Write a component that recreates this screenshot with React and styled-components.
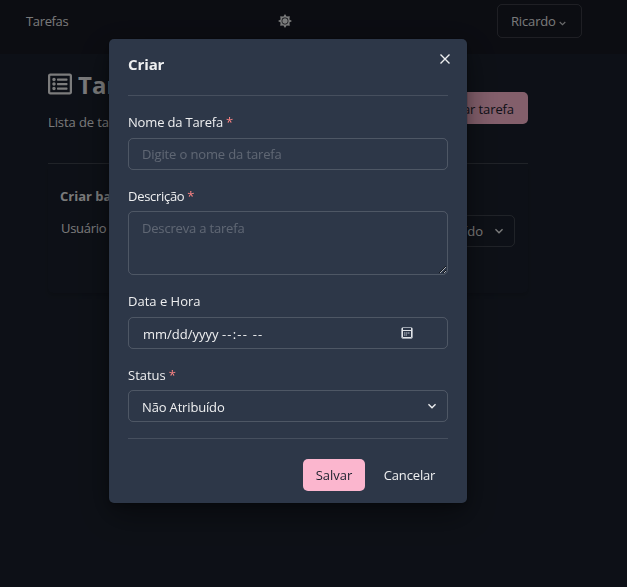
import React from "react";
import styled, { createGlobalStyle, css } from "styled-components";

const GlobalStyle = createGlobalStyle`
  *, *::before, *::after { box-sizing: border-box; }
  html, body { margin: 0; height: 100%; overflow: hidden; background: #1a202c; }
  body, input, textarea, button {
    font-family: "Open Sans", "Noto Sans", sans-serif;
    font-size: 13px;
    line-height: 20px;
    color: rgba(255, 255, 255, 0.92);
  }
  h1, h2, h3, p { margin: 0; }
`;

const Text = styled.span`
  letter-spacing: ${(p) => p.$track || 0}px;
  white-space: pre;
`;

const Navbar = styled.header`
  height: 54px;
  padding: 4px 45px 16px 26px;
  display: grid;
  grid-template-columns: 252px 1fr auto;
  align-items: center;
  background: #171923;
`;
const ThemeButton = styled.span`
  display: flex;
`;
const UserButton = styled.button`
  width: 85px;
  height: 34px;
  padding: 0 0 0 13px;
  display: flex;
  align-items: center;
  gap: 3px;
  background: transparent;
  border: 1px solid rgba(255, 255, 255, 0.16);
  border-radius: 5px;
  svg { margin-top: 4px; }
`;
const Content = styled.main`
  width: 480px;
  margin: 16px 0 0 48px;
`;
const PageHeader = styled.div`
  height: 94px;
  display: flex;
  justify-content: space-between;
  border-bottom: 1px solid rgba(255, 255, 255, 0.16);
`;
const PageTitle = styled.h1`
  display: flex;
  align-items: center;
  gap: 6px;
  height: 30px;
  font-size: 24px;
  line-height: 30px;
  font-weight: 700;
  svg { margin-top: -2px; }
`;
const Subtitle = styled.p`
  margin-top: 12px !important;
`;

const Button = styled.button`
  height: 32px;
  padding: 0;
  width: ${(p) => p.$width}px;
  border: 0;
  border-radius: 5px;
  background: ${(p) => (p.$primary ? "#fbb6ce" : "transparent")};
  color: ${(p) => (p.$primary ? "#1a202c" : "rgba(255, 255, 255, 0.92)")};
`;
const CreateButton = styled(Button)`
  margin-top: 22px;
  padding: 2px 14px 0 0;
  text-align: right;
`;

const Card = styled.section`
  height: 129px;
  padding: 22px 13px 0 12px;
  border-radius: 5px;
  box-shadow: 0 3px 5px -1px rgba(0, 0, 0, 0.1), 0 2px 3px -1px rgba(0, 0, 0, 0.06);
`;
const CardTitle = styled.h3`
  font-size: 13px;
  font-weight: 700;
`;
const CardRow = styled.div`
  margin-top: 9px;
  display: flex;
  justify-content: space-between;
`;
const CardLabel = styled.span`
  padding: 3px 0 0 1px;
`;

const fieldFrame = css`
  display: flex;
  align-items: center;
  width: 100%;
  border: 1px solid rgba(255, 255, 255, 0.16);
  border-radius: 5px;
  background: transparent;
  outline: none;
  letter-spacing: ${(p) => p.$track || 0}px;
  &::placeholder { color: rgba(255, 255, 255, 0.24); opacity: 1; }
`;
const SelectBox = styled.div`
  ${fieldFrame}
  height: 32px;
  padding: 2px 7px 0 13px;
  justify-content: space-between;
  svg { margin-top: -3px; }
`;
const CardSelect = styled(SelectBox)`
  width: 152px;
  padding-top: 0;
  justify-content: flex-end;
  gap: 8px;
  svg { margin-top: 0; }
`;
const Input = styled.input`
  ${fieldFrame}
  height: 32px;
  padding: 0 13px 1px;
`;
const TextArea = styled.textarea`
  ${fieldFrame}
  display: block;
  height: 64px;
  padding: 6px 13px;
  resize: vertical;
`;
const DateBox = styled.div`
  ${fieldFrame}
  height: 32px;
  padding: 2px 34px 0 14px;
  justify-content: space-between;
  svg { margin-top: -2px; }
`;

const Overlay = styled.div`
  position: fixed;
  inset: 0;
  background: rgba(0, 0, 0, 0.48);
  display: flex;
  align-items: flex-start;
  padding: 39px 0 0 109px;
`;
const Modal = styled.section`
  width: 358px;
  height: 464px;
  padding: 0 19px;
  border-radius: 5px;
  background: #2d3748;
  box-shadow: 0 0 0 1px rgba(0, 0, 0, 0.1), 0 4px 8px rgba(0, 0, 0, 0.2), 0 12px 32px rgba(0, 0, 0, 0.4);
`;
const ModalHeader = styled.header`
  height: 57px;
  display: flex;
  justify-content: space-between;
  border-bottom: 1px solid rgba(255, 255, 255, 0.12);
`;
const ModalTitle = styled.h2`
  padding-top: 14px;
  font-size: 15px;
  line-height: 22px;
  font-weight: 700;
`;
const CloseButton = styled.button`
  width: 26px;
  height: 26px;
  margin: 7px -10px 0 0;
  padding: 0;
  border: 0;
  display: grid;
  place-items: center;
  background: transparent;
`;
const Form = styled.form`
  padding: 16px 0;
  display: grid;
  gap: 16px;
  border-bottom: 1px solid rgba(255, 255, 255, 0.12);
`;
const Field = styled.div`
  label {
    display: flex;
    gap: 3px;
    height: ${(p) => p.$labelHeight || 26}px;
    line-height: 20px;
  }
`;
const Required = styled.span`
  color: #ff8585;
`;
const Footer = styled.footer`
  padding-top: 20px;
  display: flex;
  justify-content: flex-end;
  gap: 6px;
`;

const Chevron = () => (
  <svg width="16" height="16" viewBox="0 0 24 24" fill="currentColor">
    <path d="M16.59 8.59L12 13.17 7.41 8.59 6 10l6 6 6-6z" />
  </svg>
);
const SmallChevron = () => (
  <svg width="7" height="7" viewBox="0 0 8 8" fill="none" stroke="currentColor" strokeWidth="1.3" opacity=".85">
    <path d="M.8 2.3 4 5.3 7.2 2.3" />
  </svg>
);
const Sun = () => (
  <svg width="14" height="14" viewBox="0 0 14 14" fill="currentColor">
    <path fillRule="evenodd" d="M7 0 8.6 2.6 11.8 2.2 11.4 5.4 14 7 11.4 8.6 11.8 11.8 8.6 11.4 7 14 5.4 11.4 2.2 11.8 2.6 8.6 0 7 2.6 5.4 2.2 2.2 5.4 2.6ZM7 3.6A3.4 3.4 0 1 0 7 10.4 3.4 3.4 0 1 0 7 3.6Z" />
    <circle cx="7" cy="7" r="2.7" />
  </svg>
);
const ListIcon = () => (
  <svg width="24" height="24" viewBox="0 0 512 512" fill="currentColor">
    <path d="M464 32H48C21.49 32 0 53.49 0 80v352c0 26.51 21.49 48 48 48h416c26.51 0 48-21.49 48-48V80c0-26.51-21.49-48-48-48zm-6 400H54a6 6 0 0 1-6-6V86a6 6 0 0 1 6-6h404a6 6 0 0 1 6 6v340a6 6 0 0 1-6 6zm-42-92v24c0 6.627-5.373 12-12 12H204c-6.627 0-12-5.373-12-12v-24c0-6.627 5.373-12 12-12h200c6.627 0 12 5.373 12 12zm0-96v24c0 6.627-5.373 12-12 12H204c-6.627 0-12-5.373-12-12v-24c0-6.627 5.373-12 12-12h200c6.627 0 12 5.373 12 12zm0-96v24c0 6.627-5.373 12-12 12H204c-6.627 0-12-5.373-12-12v-24c0-6.627 5.373-12 12-12h200c6.627 0 12 5.373 12 12zm-252 12c0 19.882-16.118 36-36 36s-36-16.118-36-36 16.118-36 36-36 36 16.118 36 36zm0 96c0 19.882-16.118 36-36 36s-36-16.118-36-36 16.118-36 36-36 36 16.118 36 36zm0 96c0 19.882-16.118 36-36 36s-36-16.118-36-36 16.118-36 36-36 36 16.118 36 36z" />
  </svg>
);
const CloseIcon = () => (
  <svg width="10" height="10" viewBox="0 0 10 10" fill="none" stroke="currentColor" strokeWidth="1.4">
    <path d="M.5.5l9 9M9.5.5l-9 9" />
  </svg>
);
const CalendarIcon = () => (
  <svg width="12" height="12" viewBox="0 0 12 12" fill="none" stroke="#e2e4e8">
    <rect x=".5" y=".5" width="11" height="11" rx="1.5" stroke="#9ba2ad" />
    <path d="M1 3.5h10M1.5 1v9.5h9V1" />
    <path d="M3 6h6M3 8h3" stroke="#8f97a3" strokeWidth="1.5" strokeDasharray="1.5 .5" />
  </svg>
);

export default function App() {
  return (
    <>
      <GlobalStyle />
      <Navbar>
        <Text $track={-0.35}>Tarefas</Text>
        <ThemeButton><Sun /></ThemeButton>
        <UserButton><Text $track={-0.15}>Ricardo</Text><SmallChevron /></UserButton>
      </Navbar>
      <Content>
        <PageHeader>
          <div>
            <PageTitle><ListIcon /><span>Tarefas</span></PageTitle>
            <Subtitle><Text $track={-0.1}>Lista de tarefas</Text></Subtitle>
          </div>
          <CreateButton $primary $width={96}><Text $track={-0.1}>Criar tarefa</Text></CreateButton>
        </PageHeader>
        <Card>
          <CardTitle>Criar base</CardTitle>
          <CardRow>
            <CardLabel><Text $track={-0.3}>Usuário</Text></CardLabel>
            <CardSelect><Text>Não Atribuído</Text><Chevron /></CardSelect>
          </CardRow>
        </Card>
      </Content>
      <Overlay>
        <Modal role="dialog" aria-label="Criar">
          <ModalHeader>
            <ModalTitle><Text $track={-0.1}>Criar</Text></ModalTitle>
            <CloseButton aria-label="Fechar"><CloseIcon /></CloseButton>
          </ModalHeader>
          <Form>
            <Field>
              <label><Text $track={-0.17}>Nome da Tarefa</Text><Required>*</Required></label>
              <Input $track={-0.13} placeholder="Digite o nome da tarefa" />
            </Field>
            <Field $labelHeight={25}>
              <label><Text $track={-0.3}>Descrição</Text><Required>*</Required></label>
              <TextArea $track={-0.18} placeholder="Descreva a tarefa" />
            </Field>
            <Field>
              <label><Text>Data e Hora</Text></label>
              <DateBox>
                <span><Text>mm/dd/yyyy </Text><Text $track={1.2}>--:-- --</Text></span>
                <CalendarIcon />
              </DateBox>
            </Field>
            <Field $labelHeight={25}>
              <label><Text>Status</Text><Required>*</Required></label>
              <SelectBox><Text $track={-0.16}>Não Atribuído</Text><Chevron /></SelectBox>
            </Field>
          </Form>
          <Footer>
            <Button $primary $width={62}><Text>Salvar</Text></Button>
            <Button $width={77}><Text $track={-0.15}>Cancelar</Text></Button>
          </Footer>
        </Modal>
      </Overlay>
    </>
  );
}
